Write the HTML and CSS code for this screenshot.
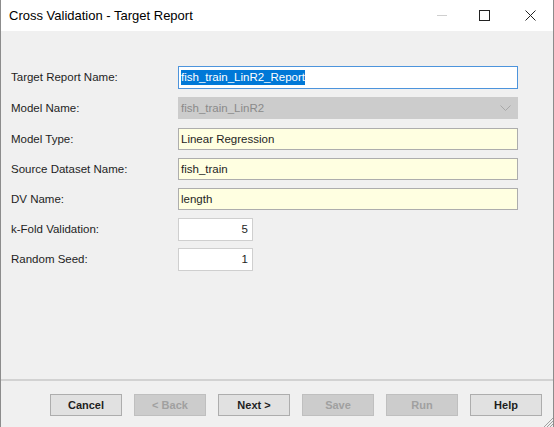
FILE: index.html
```html
<!DOCTYPE html>
<html lang="en">
<head>
  <meta charset="UTF-8" />
  <title>Cross Validation - Target Report</title>
  <link rel="stylesheet" href="styles.css">
</head>
<body>
  <div class="window">
    <div class="titlebar">
      <span class="title">Cross Validation - Target Report</span>
      <div class="controls">
        <span class="ctl min"></span>
        <span class="ctl max"></span>
        <svg class="ctl close" width="11" height="11" viewBox="0 0 11 11">
          <path d="M0.5 0.5 L10.5 10.5 M10.5 0.5 L0.5 10.5" stroke="#222" stroke-width="1" fill="none"/>
        </svg>
      </div>
    </div>

    <div class="form">
      <div class="row gap1">
        <label>Target Report Name:</label>
        <div class="field focus"><span class="sel">fish_train_LinR2_Report</span></div>
      </div>
      <div class="row gap1">
        <label>Model Name:</label>
        <div class="field disabled">
          <span>fish_train_LinR2</span>
          <svg class="chev" width="11" height="7" viewBox="0 0 11 7">
            <path d="M0.5 0.5 L5.5 5.5 L10.5 0.5" stroke="#a8a8a8" stroke-width="1" fill="none"/>
          </svg>
        </div>
      </div>
      <div class="row">
        <label>Model Type:</label>
        <div class="field readonly">Linear Regression</div>
      </div>
      <div class="row">
        <label>Source Dataset Name:</label>
        <div class="field readonly">fish_train</div>
      </div>
      <div class="row">
        <label>DV Name:</label>
        <div class="field readonly">length</div>
      </div>
      <div class="row">
        <label>k-Fold Validation:</label>
        <div class="field num">5</div>
      </div>
      <div class="row">
        <label>Random Seed:</label>
        <div class="field num">1</div>
      </div>
    </div>

    <div class="footer">
      <button class="btn">Cancel</button>
      <button class="btn" disabled>&lt; Back</button>
      <button class="btn">Next &gt;</button>
      <button class="btn" disabled>Save</button>
      <button class="btn" disabled>Run</button>
      <button class="btn">Help</button>
      <svg class="grip" width="12" height="12" viewBox="0 0 12 12">
        <path d="M12 3 L3 12 M12 6 L6 12 M12 9 L9 12" stroke="#a0a0a0" stroke-width="1" fill="none"/>
      </svg>
    </div>
  </div>
</body>
</html>
```

FILE: styles.css
```css
html, body {
  margin: 0;
  padding: 0;
}
body {
  font-family: 'Liberation Sans', Arial, sans-serif;
  font-size: 11.5px;
  color: #1e1e1e;
  background: #f0f0f0;
}
.window {
  width: 554px;
  height: 427px;
  box-sizing: border-box;
  border-left: 1px solid #8c8c8c;
  border-right: 1px solid #8c8c8c;
  display: flex;
  flex-direction: column;
  background: #f0f0f0;
  position: relative;
}
.titlebar {
  height: 31px;
  background: #fff;
  display: flex;
  align-items: center;
  justify-content: space-between;
  padding-left: 8px;
}
.title {
  font-size: 13px;
  color: #000;
}
.controls {
  display: flex;
  align-items: center;
  height: 100%;
}
.ctl {
  display: block;
}
.min {
  width: 10px;
  height: 1px;
  background: #cfcfcf;
  margin-right: 32px;
}
.max {
  width: 9px;
  height: 9px;
  border: 1px solid #222;
  margin-right: 35px;
}
.close {
  margin-right: 17px;
}
.form {
  flex: 1;
  padding: 35px 0 0 10px;
  display: flex;
  flex-direction: column;
  gap: 8px;
}
.row {
  display: flex;
  align-items: center;
  height: 22px;
}
.row.gap1 {
  margin-bottom: 1px;
}
.row label {
  width: 167px;
  flex: none;
}
.field {
  box-sizing: border-box;
  width: 340px;
  height: 22px;
  border: 1px solid #b4b4b4;
  background: #fff;
  display: flex;
  align-items: center;
  padding: 0 2px;
  white-space: nowrap;
}
.field.focus {
  border-color: #4d94dc;
  height: 23px;
}
.sel {
  background: #0078d7;
  color: #fff;
  line-height: 15px;
}
.field.disabled {
  background: #cccccc;
  border-color: #cccccc;
  color: #8a8a8a;
  justify-content: space-between;
  padding-right: 6px;
}
.field.readonly {
  background: #ffffe1;
  border-color: #adadad;
}
.field.num {
  width: 75px;
  height: 23px;
  justify-content: flex-end;
  padding-right: 4px;
  border-color: #cfcfcf;
}
.footer {
  height: 48px;
  box-sizing: border-box;
  border-top: 2px solid #d2d2d2;
  padding: 13px 0 0 49px;
  display: flex;
  align-items: flex-start;
  gap: 12px;
  position: relative;
}
.btn {
  width: 72px;
  height: 22px;
  font-family: inherit;
  font-size: 11px;
  font-weight: bold;
  color: #1e1e1e;
  background: #e1e1e1;
  border: 1px solid #adadad;
  padding: 0;
}
.btn:disabled {
  background: #cccccc;
  border-color: #bfbfbf;
  color: #a0a0a0;
}
.grip {
  position: absolute;
  right: 0;
  bottom: 0;
}
```
